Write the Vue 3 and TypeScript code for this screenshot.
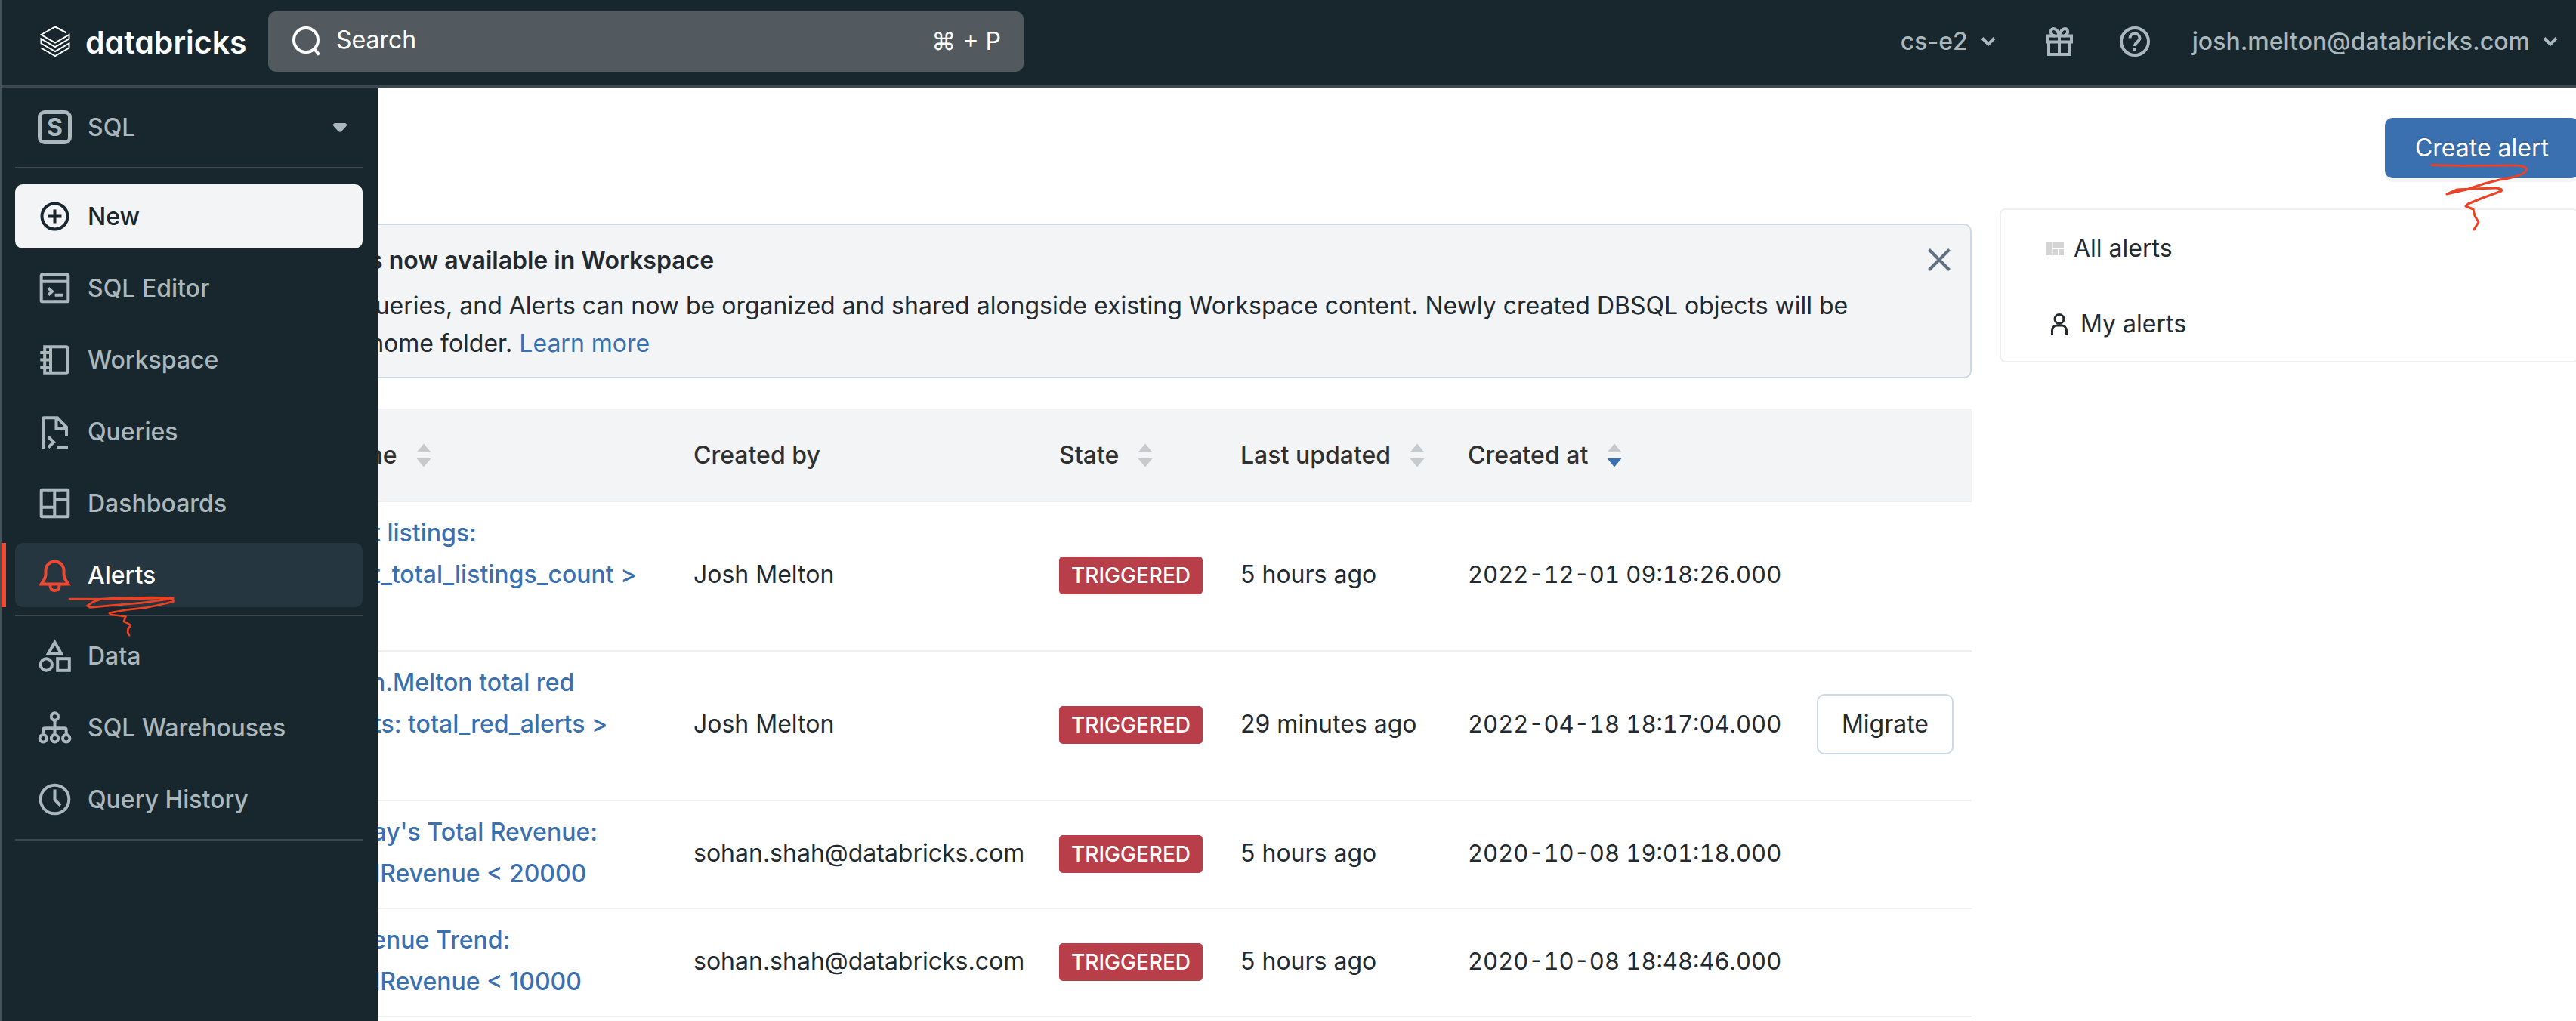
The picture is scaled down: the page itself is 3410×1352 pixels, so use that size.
<script setup lang="ts">
interface NavItem {
  label: string
  icon: string
  state?: 'primary' | 'active'
}

interface AlertRow {
  name: string[]
  createdBy: string
  state: string
  updated: string
  createdAt: string
  migrate?: boolean
}

interface Column {
  label: string
  key: string
  sort?: 'none' | 'desc'
}

const navGroups: NavItem[][] = [
  [
    { label: 'New', icon: 'new', state: 'primary' },
    { label: 'SQL Editor', icon: 'editor' },
    { label: 'Workspace', icon: 'workspace' },
    { label: 'Queries', icon: 'queries' },
    { label: 'Dashboards', icon: 'dashboards' },
    { label: 'Alerts', icon: 'alerts', state: 'active' },
  ],
  [
    { label: 'Data', icon: 'data' },
    { label: 'SQL Warehouses', icon: 'warehouses' },
    { label: 'Query History', icon: 'history' },
  ],
]

const columns: Column[] = [
  { label: 'Name', key: 'name', sort: 'none' },
  { label: 'Created by', key: 'by' },
  { label: 'State', key: 'state', sort: 'none' },
  { label: 'Last updated', key: 'updated', sort: 'none' },
  { label: 'Created at', key: 'created', sort: 'desc' },
]

const rows: AlertRow[] = [
  {
    name: ['Best listings:', 'Best_total_listings_count >', '0'],
    createdBy: 'Josh Melton',
    state: 'TRIGGERED',
    updated: '5 hours ago',
    createdAt: '2022-12-01 09:18:26.000',
  },
  {
    name: ['Josh.Melton total red', 'alerts: total_red_alerts >', '0'],
    createdBy: 'Josh Melton',
    state: 'TRIGGERED',
    updated: '29 minutes ago',
    createdAt: '2022-04-18 18:17:04.000',
    migrate: true,
  },
  {
    name: ["Today's Total Revenue:", 'totalRevenue < 20000'],
    createdBy: 'sohan.shah@databricks.com',
    state: 'TRIGGERED',
    updated: '5 hours ago',
    createdAt: '2020-10-08 19:01:18.000',
  },
  {
    name: ['Revenue Trend:', 'totalRevenue < 10000'],
    createdBy: 'sohan.shah@databricks.com',
    state: 'TRIGGERED',
    updated: '5 hours ago',
    createdAt: '2020-10-08 18:48:46.000',
  },
]
</script>

<template>
  <div class="app">
    <header class="topbar">
      <a class="brand" href="#">
        <svg class="brand-mark" viewBox="0 0 40 42" aria-hidden="true">
          <path d="M35 9.5 20 1.5 1.5 12 20 22.500 38.500 12V17.500L20 28 1.500 17.500V23.500L20 34 38.500 23.500V29.500L20 40.200 1.500 29.500" />
        </svg>
        <span class="brand-name">databricks</span>
      </a>

      <form class="search" role="search" @submit.prevent>
        <svg class="search-icon" viewBox="0 0 38 40" aria-hidden="true">
          <circle cx="18" cy="18" r="16" />
          <path d="m28.500 29 7 8.500" />
        </svg>
        <input type="search" placeholder="Search" aria-label="Search" />
        <kbd>⌘ + P</kbd>
      </form>

      <div class="account">
        <button type="button" class="menu workspace-menu">
          cs-e2
          <svg class="chevron" viewBox="0 0 20 12" aria-hidden="true"><path d="m2 1.500 8 8 8-8" /></svg>
        </button>
        <button type="button" class="icon-button gift" aria-label="What's new">
          <svg viewBox="0 0 36 38" aria-hidden="true">
            <path d="M2 11.500h32v8H2zM4 19.500v16.500h28V19.500M18 11.500V36" />
            <path d="M18 11.500C16 4 13 2 10.500 2 7 2 6 6 7.500 8.500 8.500 10.500 10 11.500 12 11.500M18 11.500C20 4 23 2 25.500 2 29 2 30 6 28.500 8.500 27.500 10.500 26 11.500 24 11.500" />
          </svg>
        </button>
        <button type="button" class="icon-button help" aria-label="Help">
          <svg viewBox="0 0 40 40" aria-hidden="true">
            <circle cx="20" cy="20" r="18" />
            <path d="M13.500 15.500c0-4 3-6 6.500-6s6.500 2.500 6.500 6c0 4.500-6.500 5-6.500 10.500" />
            <path d="M20 28v4.500" />
          </svg>
        </button>
        <button type="button" class="menu">
          josh.melton@databricks.com
          <svg class="chevron" viewBox="0 0 20 12" aria-hidden="true"><path d="m2 1.500 8 8 8-8" /></svg>
        </button>
      </div>
    </header>

    <div class="body">
      <nav class="sidebar" aria-label="Main">
        <button type="button" class="persona">
          <span class="persona-badge" aria-hidden="true">S</span>
          <span>SQL</span>
          <svg class="caret" viewBox="0 0 20 14" aria-hidden="true">
            <path d="M3 1h14q3 1 1.500 4l-6.500 7q-2 1.500-4 0L1.500 5Q0 2 3 1z" />
          </svg>
        </button>

        <ul v-for="(group, g) in navGroups" :key="g">
          <li v-for="item in group" :key="item.label" :class="item.state">
            <a href="#" :aria-current="item.state === 'active' ? 'page' : undefined">
              <svg class="nav-icon" viewBox="0 0 45 45" aria-hidden="true">
                <template v-if="item.icon === 'new'">
                  <circle cx="22.500" cy="22.500" r="17" />
                  <path d="M13.500 22.500h18M22.500 13.500v18" />
                </template>
                <template v-else-if="item.icon === 'editor'">
                  <rect x="4.700" y="4.700" width="35.600" height="35.600" rx="1" />
                  <path d="M4.700 13.800h35.600M14 22.500l5 4.500-5 4.500M22.700 31.700h11.300" />
                </template>
                <template v-else-if="item.icon === 'workspace'">
                  <path d="M9.200 5.200h28.300q2 0 2 2v30.600q0 2-2 2H9.200zM17 5.200v34.600M3.300 13h13.700M3.300 22.500h13.700M3.300 32h13.700" />
                </template>
                <template v-else-if="item.icon === 'queries'">
                  <path d="M7 45V5.300q0-1 1-1h18L38 16.500V28M24.500 4.300v14H38M14 29.500l7 7-7 7M25 43h15" />
                </template>
                <template v-else-if="item.icon === 'dashboards'">
                  <rect x="4.700" y="4.700" width="35.600" height="35.600" rx="1" />
                  <path d="M22.300 4.700v35.600M22.300 17.700h18M4.700 27.700h17.600" />
                </template>
                <template v-else-if="item.icon === 'alerts'">
                  <path d="M22.500 4.500c-7 0-12 5.500-12 12v4c0 3-.5 5-1.500 7l-4.300 7h35.600l-4.300-7c-1-2-1.500-4-1.500-7v-4c0-6.500-5-12-12-12z" />
                  <path d="M16.500 35v2a6 6 0 0 0 12 0v-2" />
                </template>
                <template v-else-if="item.icon === 'data'">
                  <path d="M22.500 4.500 14.200 19h16.600z" />
                  <circle cx="11.300" cy="34" r="7.700" />
                  <rect x="26.200" y="26.200" width="15.600" height="15.600" />
                </template>
                <template v-else-if="item.icon === 'warehouses'">
                  <circle cx="22.500" cy="8" r="4.700" />
                  <circle cx="7.300" cy="36.700" r="4.700" />
                  <circle cx="22.500" cy="36.700" r="4.700" />
                  <circle cx="37.700" cy="36.700" r="4.700" />
                  <path d="M22.500 13v19M7.300 32v-6.500q0-2.200 2.200-2.200h26q2.200 0 2.200 2.200V32" />
                </template>
                <template v-else>
                  <circle cx="22.500" cy="22.500" r="18.800" />
                  <path d="M22.500 9.500V23l7.500 7.500" />
                </template>
              </svg>
              <span>{{ item.label }}</span>
            </a>
            <svg v-if="item.state === 'active'" class="ink ink-nav" viewBox="270 295 430 171" aria-hidden="true">
              <path d="M276 310 480 311 689 306 600 304 520 306 450 307 400 311 370 322 347 337 358 344 420 338 560 326 688 309 690 320 660 328 580 345 500 354 435 366 440 373 470 376 500 380 492 400 508 407 519 415 509 430 508 443 514 455" />
            </svg>
          </li>
        </ul>
      </nav>

      <main class="content">
        <div class="toolbar">
          <button type="button" class="create">
            Create alert
            <svg class="ink ink-create" viewBox="595 92 135 95" aria-hidden="true">
              <path d="M600 98.500 640 99.500 708 99Q724 99 725.500 104 726 109 713 113 700 117 690 118L670 123 646 131 620 137 633 131 655 130 685 129Q695 130 692 133L665 143 648 150 645 153 655 157 657 166 662 174 656 184" />
            </svg>
          </button>
        </div>

        <div class="columns">
          <div class="primary-column">
            <section class="banner">
              <div class="banner-text">
                <h2>DBSQL items is now available in Workspace</h2>
                <p>
                  Dashboards, Queries, and Alerts can now be organized and shared alongside existing Workspace content. Newly created DBSQL objects will be<br />
                  stored in your home folder. <a href="#">Learn more</a>
                </p>
              </div>
              <button type="button" class="close" aria-label="Close">
                <svg viewBox="0 0 30 30" aria-hidden="true"><path d="m1.500 1.500 27 27M28.500 1.500l-27 27" /></svg>
              </button>
            </section>

            <table class="alerts">
              <colgroup>
                <col class="col-lead" />
                <col class="col-name" />
                <col class="col-by" />
                <col class="col-state" />
                <col class="col-updated" />
                <col class="col-created" />
                <col class="col-action" />
              </colgroup>
              <thead>
                <tr>
                  <td></td>
                  <th v-for="c in columns" :key="c.key" scope="col">
                    <span class="heading">
                      {{ c.label }}
                      <svg v-if="c.sort" class="sorter" :class="c.sort" viewBox="0 0 20 32" aria-hidden="true">
                        <path class="up" d="M10 0.500 19.500 12H0.500z" />
                        <path class="down" d="M0.500 20h19L10 31.500z" />
                      </svg>
                    </span>
                  </th>
                  <td></td>
                </tr>
              </thead>
              <tbody>
                <tr v-for="row in rows" :key="row.createdAt">
                  <td></td>
                  <td class="name">
                    <a href="#"><span v-for="line in row.name" :key="line">{{ line }}</span></a>
                  </td>
                  <td>{{ row.createdBy }}</td>
                  <td><span class="badge">{{ row.state }}</span></td>
                  <td>{{ row.updated }}</td>
                  <td class="timestamp">{{ row.createdAt }}</td>
                  <td class="action"><button v-if="row.migrate" type="button" class="migrate">Migrate</button></td>
                </tr>
              </tbody>
            </table>
          </div>

          <aside class="filters">
            <a href="#">
              <svg class="grid-icon" viewBox="0 0 23 18" aria-hidden="true">
                <path d="M0 0h7v18H0zM8.500 0H23v8.500H8.500zM8.500 10h6.500v8H8.500zM16.500 10H23v8h-6.500z" />
              </svg>
              All alerts
            </a>
            <a href="#" class="mine">
              <svg class="user-icon" viewBox="0 0 22 28" aria-hidden="true">
                <circle cx="11" cy="7.500" r="6" />
                <path d="M1.500 28v-5c0-4.500 3-7 6.500-7h6c3.500 0 6.500 2.500 6.500 7v5" />
              </svg>
              My alerts
            </a>
          </aside>
        </div>
      </main>
    </div>
  </div>
</template>

<style>
body {
  margin: 0;
}
</style>

<style scoped>
* {
  box-sizing: border-box;
}

.app {
  --night: #18272e;
  --night-line: #3c4850;
  --mist: #aab8be;
  --blue: #3a70b0;
  --ink: #22292f;
  --hairline: #eef0f0;
  --panel: #f3f4f6;
  position: relative;
  display: flex;
  flex-direction: column;
  min-height: 100vh;
  overflow: hidden;
  background: #fff;
  color: var(--ink);
  font: 400 32px/50px Inter, "Liberation Sans", sans-serif;
}

.app::before {
  content: "";
  position: absolute;
  z-index: 3;
  inset: 0 auto 0 0;
  width: 2px;
  background: #46525a;
}

button,
input,
kbd {
  font: inherit;
  color: inherit;
}

button {
  border: 0;
  background: none;
  padding: 0;
  cursor: pointer;
}

a {
  color: inherit;
  text-decoration: none;
}

svg {
  display: block;
  flex: none;
  fill: none;
  stroke: currentColor;
}

/* Top bar */
.topbar {
  display: flex;
  align-items: center;
  height: 116px;
  padding: 0 24px 3px 53px;
  border-bottom: 3px solid var(--night-line);
  background: var(--night);
  color: var(--mist);
  font-weight: 500;
}

.brand {
  display: flex;
  align-items: center;
  gap: 20px;
  width: 302px;
  color: #fff;
}

.brand-mark {
  width: 40px;
  height: 42px;
  stroke-width: 2;
}

.brand-name {
  padding-top: 2px;
  font-size: 41px;
  font-weight: 600;
  font-feature-settings: "cv11";
}

.search {
  display: flex;
  align-items: center;
  flex: 0 1 1000px;
  height: 80px;
  padding: 0 30px 0 32px;
  border-radius: 10px;
  background: #525a60;
  color: #fff;
  font-weight: 400;
}

.search-icon {
  width: 38px;
  height: 40px;
  stroke-width: 4;
}

.search input {
  flex: 1;
  min-width: 0;
  height: 80px;
  padding: 0 0 6px 20px;
  border: 0;
  outline: 0;
  background: none;
  appearance: none;
}

.search input::placeholder {
  color: #fff;
  opacity: 1;
}

.account {
  display: flex;
  align-items: center;
  margin-left: auto;
}

.menu {
  display: flex;
  align-items: center;
  gap: 17px;
}

.chevron {
  width: 20px;
  height: 12px;
  stroke-width: 4;
}

.gift {
  margin-left: 66px;
}

.gift svg {
  width: 36px;
  height: 38px;
  stroke-width: 4;
}

.help {
  margin: 0 56px 0 62px;
}

.help svg {
  width: 40px;
  height: 40px;
  stroke-width: 4;
}

/* Body and side navigation */
.body {
  position: relative;
  flex: 1;
}

.sidebar {
  position: absolute;
  z-index: 2;
  inset: 0 auto 0 0;
  width: 500px;
  padding: 0 20px;
  background: var(--night);
  color: var(--mist);
  font-weight: 500;
}

.persona {
  display: flex;
  align-items: center;
  gap: 21px;
  width: 100%;
  height: 105px;
  padding: 0 20px 0 30px;
}

.persona-badge {
  width: 45px;
  height: 45px;
  border: 5px solid var(--mist);
  border-radius: 9px;
  font-weight: 700;
  line-height: 35px;
  text-align: center;
}

.caret {
  width: 20px;
  height: 14px;
  margin-left: auto;
  fill: currentColor;
  stroke: none;
}

.sidebar ul {
  display: flex;
  flex-direction: column;
  gap: 10px;
  margin: 0;
  padding: 10px 0;
  border-top: 2px solid var(--night-line);
  list-style: none;
}

.sidebar ul:first-of-type {
  padding-top: 21px;
}

.sidebar ul:last-of-type {
  border-bottom: 2px solid var(--night-line);
}

.sidebar li {
  position: relative;
}

.sidebar li a {
  display: flex;
  align-items: center;
  gap: 21px;
  height: 85px;
  padding-left: 30px;
  border-radius: 10px;
}

.nav-icon {
  width: 45px;
  height: 45px;
  stroke-width: 4;
  overflow: visible;
}

.primary a {
  background: var(--panel);
  color: var(--night);
}

.active a {
  background: #253640;
  color: #fff;
}

.active .nav-icon {
  color: #ee4a33;
}

.active::before {
  content: "";
  position: absolute;
  inset: 0 auto 0 -18px;
  width: 6px;
  background: #ee4a33;
}

.ink {
  position: absolute;
  z-index: 1;
  color: #ee4023;
  stroke-linecap: round;
  stroke-linejoin: round;
  pointer-events: none;
}

.ink-nav {
  left: 70px;
  top: 69px;
  width: 143px;
  height: 57px;
  stroke-width: 8;
}

.ink-create {
  left: 57px;
  top: 56px;
  width: 135px;
  height: 95px;
  stroke-width: 3;
}

/* The page runs under the side navigation and past the right edge */
.content {
  margin: 0 -4px 0 248px;
  padding: 40px 0 0;
}

.toolbar {
  display: flex;
  justify-content: flex-end;
  margin-bottom: 40px;
}

.create {
  position: relative;
  height: 80px;
  padding: 0 40px;
  border-radius: 10px;
  background: var(--blue);
  box-shadow: 0 5px 0 rgba(0, 0, 0, 0.04);
  color: #fff;
  text-shadow: 0 -2px 0 rgba(0, 0, 0, 0.12);
}

.columns {
  display: grid;
  grid-template-columns: minmax(0, 1fr) 767px;
  gap: 37px;
  align-items: start;
}

.primary-column {
  display: flex;
  flex-direction: column;
  gap: 40px;
  padding-top: 20px;
}

.banner {
  display: flex;
  align-items: flex-start;
  justify-content: space-between;
  padding: 22px 26px 19px 22px;
  border: 2px solid #cdd9e4;
  border-radius: 10px;
  background: var(--panel);
}

.banner-text {
  display: flex;
  flex-direction: column;
  gap: 10px;
}

.banner h2,
.banner p {
  margin: 0;
  font-size: 32px;
  white-space: nowrap;
}

.banner h2 {
  font-weight: 600;
}

.banner p a {
  color: var(--blue);
}

.close {
  margin-top: 9px;
  color: #5f7182;
}

.close svg {
  width: 30px;
  height: 30px;
  stroke-width: 4;
}

/* Alerts table */
.alerts {
  width: 100%;
  border-collapse: separate;
  border-spacing: 0;
  table-layout: fixed;
}

.col-lead {
  width: 172px;
}

.col-by {
  width: 484px;
}

.col-state {
  width: 240px;
}

.col-updated {
  width: 301px;
}

.col-created {
  width: 461px;
}

.col-action {
  width: 222px;
}

thead td,
th {
  height: 124px;
  padding: 2px 16px 0;
  border-bottom: 2px solid var(--hairline);
  background: var(--panel);
  color: #303030;
  font-weight: 500;
  text-align: left;
}

.heading {
  display: flex;
  align-items: center;
  gap: 25px;
}

.sorter {
  width: 20px;
  height: 32px;
  fill: #c6cacd;
  stroke: none;
}

.sorter.desc .down {
  fill: var(--blue);
}

tbody td {
  padding: 13px 16px 18px;
  border-bottom: 2px solid var(--hairline);
  line-height: 55px;
  vertical-align: middle;
  white-space: nowrap;
}

.name {
  color: var(--blue);
  font-weight: 500;
}

.name span {
  display: block;
}

.timestamp {
  font-size: 31px;
  font-variant-numeric: tabular-nums;
}

.badge {
  display: inline-block;
  height: 50px;
  padding: 0 16px;
  border-radius: 5px;
  background: #b83f49;
  color: #fff;
  font-size: 28px;
  font-weight: 500;
  line-height: 50px;
}

tbody .action {
  padding-right: 24px;
  text-align: right;
}

.migrate {
  height: 80px;
  padding: 0 31px;
  border: 2px solid #cdd9e4;
  border-radius: 10px;
}

/* Filter list */
.filters {
  border: 2px solid #f0f0f0;
  border-radius: 8px;
}

.filters a {
  display: flex;
  align-items: center;
  gap: 13px;
  height: 100px;
  padding: 2px 0 0 60px;
}

.filters .mine {
  gap: 17px;
  padding-left: 66px;
}

.grid-icon {
  width: 23px;
  height: 18px;
  fill: #d4d4d4;
  stroke: none;
}

.user-icon {
  width: 22px;
  height: 28px;
  stroke-width: 3;
}
</style>
